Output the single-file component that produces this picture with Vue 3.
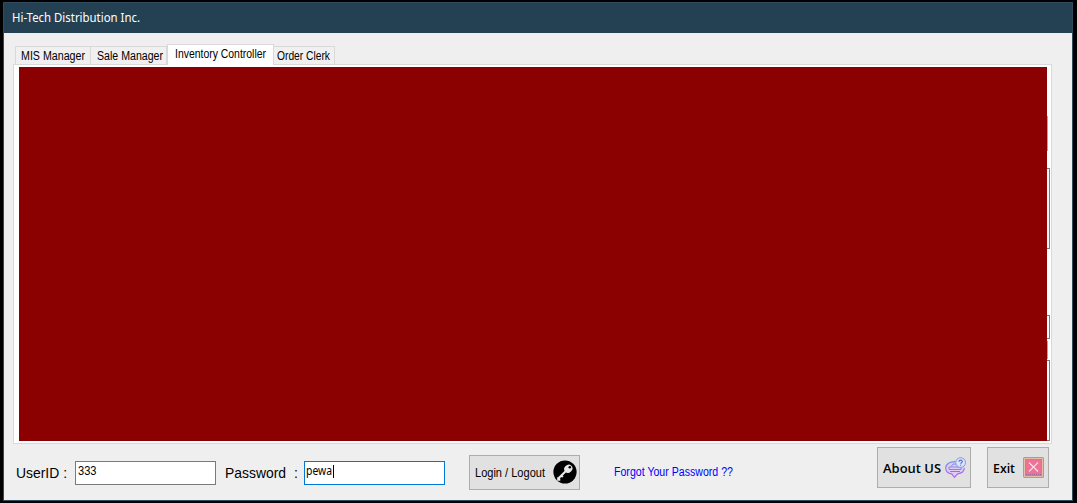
<script setup>
const tabs = [
  { name: 'MIS Manager', box: 76, pad: 5, len: 64 },
  { name: 'Sale Manager', box: 76, pad: 6, len: 66 },
  { name: 'Inventory Controller', box: 107, pad: 7, len: 91, active: true },
  { name: 'Order Clerk', box: 61, pad: 3, len: 53 },
]
</script>

<template>
  <div class="desktop">
    <main class="window">
      <header class="titlebar">
        <svg width="140" height="20"><text class="ui" x="0" y="14" textLength="128" lengthAdjust="spacingAndGlyphs">Hi-Tech Distribution Inc.</text></svg>
      </header>
      <nav class="tabs">
        <div v-for="t in tabs" :key="t.name" class="tab" :class="{ active: t.active }" :style="{ width: t.box + 'px', paddingLeft: t.pad + 'px' }">
          <svg :width="t.len + 1" height="18"><text x="0" y="13" :textLength="t.len" lengthAdjust="spacingAndGlyphs">{{ t.name }}</text></svg>
        </div>
      </nav>
      <section class="panel">
        <div class="cover"></div>
        <div class="edges">
          <i class="sliver first"></i>
          <i class="box list"></i>
          <i class="box field"></i>
          <i class="sliver second"></i>
          <i class="box grid"></i>
        </div>
      </section>
      <footer class="bar">
        <svg class="user-label" width="54" height="22"><text class="big" x="0" y="16" textLength="51" lengthAdjust="spacingAndGlyphs">UserID :</text></svg>
        <div class="input user"><svg width="24" height="20"><text x="0" y="13" textLength="18.5" lengthAdjust="spacingAndGlyphs">333</text></svg></div>
        <svg class="pass-label" width="79" height="22"><text class="big" x="0" y="16" textLength="61" lengthAdjust="spacingAndGlyphs">Password</text><text class="big" x="69" y="16">:</text></svg>
        <div class="input pass"><svg width="32" height="20"><text class="ui" x="0" y="13" textLength="26" lengthAdjust="spacingAndGlyphs">pewa</text><path d="M27.5 3v13" stroke="#000" /></svg></div>
        <button class="login">
          <svg width="71" height="20"><text x="0" y="14" textLength="70" lengthAdjust="spacingAndGlyphs">Login / Logout</text></svg>
          <svg class="key" width="24" height="24" viewBox="0 0 24 24">
            <circle cx="12" cy="12" r="11.6" fill="#000" />
            <path d="M13.2 10.8 5.3 18.5M5.2 17.2v2.4h2.1M8.4 15.5l1.4 1.4" fill="none" stroke="#e8e8e8" stroke-width="2.1" />
            <ellipse cx="15.3" cy="8.7" rx="4.3" ry="3.8" transform="rotate(-45 15.3 8.7)" fill="#e8e8e8" />
            <circle cx="16.8" cy="7.2" r="1.3" fill="#000" />
          </svg>
        </button>
        <svg class="forgot" width="121" height="20"><text x="0" y="14" textLength="119" lengthAdjust="spacingAndGlyphs">Forgot Your Password ??</text></svg>
        <button class="about">
          <svg width="60" height="22"><text class="bold" x="0" y="16" textLength="58" lengthAdjust="spacingAndGlyphs">About US</text></svg>
          <svg class="chat" width="22" height="22" viewBox="0 0 22 22" fill="none">
            <defs><linearGradient id="bubble" x1="0" y1="0" x2="0" y2="1"><stop stop-color="#6f98ef" /><stop offset="1" stop-color="#bd5cf2" /></linearGradient></defs>
            <path d="M10.5 4.6C5 4.3.7 7 .7 11c0 3.2 2.6 5.4 6 5.9l2.8 3.4 3-3.4c4.2-.6 6.7-2.7 6.9-6" fill="#dccff3" stroke="url(#bubble)" stroke-width="1.2" />
            <path d="M6 9.5 8.2 7h3l1.8 2.5M4 10h12v2.5H4z" stroke="#817be5" stroke-width=".9" />
            <path d="M5 14.5h10" stroke="#a06ae8" />
            <circle cx="15.6" cy="5.6" r="4.9" fill="#dbe4f6" stroke="#7d99ec" />
            <path d="M14 4.7c0-2.2 3.5-2 3.2 0-.1 1-1.5 1-1.5 2.1M15.7 7.7v1" stroke="#496fd2" stroke-width="1.1" />
          </svg>
        </button>
        <button class="exit">
          <svg width="24" height="22"><text class="bold" x="0" y="16" textLength="22" lengthAdjust="spacingAndGlyphs">Exit</text></svg>
          <svg class="close" width="21" height="21" viewBox="0 0 21 21">
            <rect x=".6" y=".6" width="19.8" height="19.8" rx="1" fill="#eed0a0" stroke="#b58fb8" stroke-width="1.2" />
            <rect x="2.5" y="2.5" width="16" height="16" fill="#ed7199" stroke="#b585a0" />
            <path d="M3 17.5h15" stroke="#a364a0" stroke-dasharray="1 1" />
            <path d="m6 5.5 9 9m0-9-9 9" stroke="#f8e1df" stroke-width="1.1" />
          </svg>
        </button>
      </footer>
    </main>
  </div>
</template>

<style>
body { margin: 0; overflow: hidden; }
</style>

<style scoped>
* { box-sizing: border-box; }
svg { display: block; flex: none; overflow: visible; }
text { font: 12px "Liberation Sans", Arial, sans-serif; fill: #000; }
text.ui { font: 12px "Noto Sans", "Open Sans", sans-serif; }
text.big { font-size: 14px; }
text.bold { font: 600 13px "Open Sans", "Noto Sans", sans-serif; }
.desktop { width: 1077px; height: 503px; background: #000; padding: 2px 0 0 3px; }
.window { width: 1070px; height: 499px; border: 1px solid #2f4b60; background: #efefef; }
.titlebar { height: 30px; background: #244053; padding: 5px 0 0 8px; }
.titlebar text { fill: #fff; }
.tabs { height: 21px; margin: 11px 0 0 11px; display: flex; align-items: flex-end; }
.tab { height: 19px; border: 1px solid #d9d9d9; border-left-width: 0; background: #f0f0f0; flex: none; }
.tab:first-child { border-left-width: 1px; }
.tab.active { height: 21px; background: #fff; border-left-width: 1px; border-bottom: 0; position: relative; z-index: 1; }
.panel { width: 1039px; height: 380px; margin: -1px 0 0 9px; border: 1px solid #d9d9d9; background: #fff; padding: 2px 0 0 5px; display: flex; }
.cover { width: 1028px; height: 374px; background: #8b0000; }
.edges { width: 3px; height: 374px; }
.edges i { display: block; }
.sliver { width: 1px; height: 35px; background: #b8a0a0; }
.sliver.first { margin: 49px 0 17px; }
.sliver.second { height: 18px; margin: 2px 0 1px; }
.box { width: 3px; border: 1px solid #7a7a7a; border-left: 0; }
.box.list { height: 81px; background: #f8f8f8; }
.box.field { height: 24px; margin-top: 66px; }
.box.grid { height: 81px; }
.bar { display: flex; height: 56px; padding: 3px 0 0 12px; align-items: flex-start; }
.user-label { margin-top: 15px; }
.input { height: 24px; width: 141px; background: #fff; border: 1px solid #7a7a7a; margin-top: 14px; padding-left: 2px; }
.user { margin-left: 5px; }
.pass-label { margin: 15px 0 0 9px; }
.pass { border-color: #0078d7; padding-left: 1px; }
button { display: flex; background: #e1e1e1; border: 1px solid #adadad; border-radius: 0; padding: 0; margin: 0; flex: none; }
.login { width: 111px; height: 35px; margin: 8px 0 0 24px; padding: 7px 0 0 5px; }
.key { margin: -3px 0 0 7px; }
.forgot { margin: 15px 0 0 34px; }
.forgot text { fill: #00f; }
.about { width: 94px; height: 41px; margin-left: 142px; padding: 9px 0 0 5px; }
.chat { margin: 0 0 0 2px; }
.exit { width: 62px; height: 41px; margin-left: 16px; padding: 9px 0 0 5px; }
.close { margin-left: 6px; }
</style>
